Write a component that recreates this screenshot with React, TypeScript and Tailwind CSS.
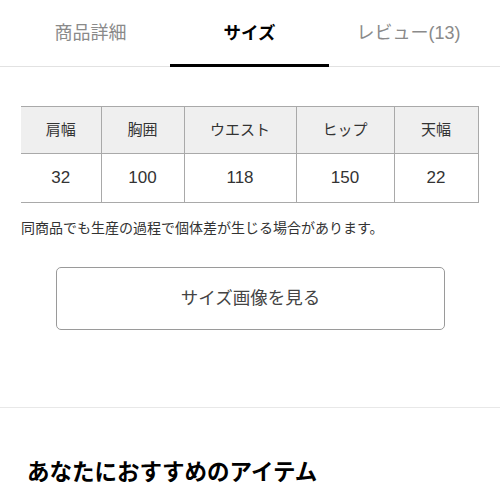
import React from "react";

const tabs = ["商品詳細", "サイズ", "レビュー(13)"];
const active = 1;

const columns = [
  { label: "肩幅", value: "32", w: "w-[80px]" },
  { label: "胸囲", value: "100", w: "w-[83px]" },
  { label: "ウエスト", value: "118", w: "w-[112px]" },
  { label: "ヒップ", value: "150", w: "w-[98px]" },
  { label: "天幅", value: "22", w: "w-[84px]" },
];

export default function App() {
  return (
    <div className="w-[500px] h-[500px] overflow-hidden bg-white font-['Liberation_Sans','Noto_Sans_CJK_JP',sans-serif] text-[#333]">
      {/* Tabs */}
      <div className="flex px-[11px] border-b border-[#e2e2e2]">
        {tabs.map((t, i) => (
          <div
            key={t}
            className={
              i === active
                ? "w-[159px] h-[67px] -mb-px flex items-center justify-center pt-[3px] border-b-[3px] border-black text-[17.5px] font-bold text-black"
                : "w-[159px] h-[66px] flex items-center justify-center text-[18px] text-[#8a8a8a]"
            }
          >
            {t}
          </div>
        ))}
      </div>

      {/* Size table */}
      <div className="pl-[21px] pt-[39px]">
        <table className="border-collapse">
          <thead>
            <tr>
              {columns.map((c, i) => (
                <th
                  key={c.label}
                  className={`${c.w} h-[47px] bg-[#efefef] font-normal text-[15px] text-[#333] border-t-[1.5px] border-b-[1.5px] border-[#a9a9a9] ${i > 0 ? "border-l-[1.5px]" : ""} ${i === columns.length - 1 ? "border-r-[1.5px]" : ""}`}
                >
                  {c.label}
                </th>
              ))}
            </tr>
          </thead>
          <tbody>
            <tr>
              {columns.map((c, i) => (
                <td
                  key={c.label}
                  className={`${c.w} h-[49px] text-center text-[17px] text-[#333] border-b-[1.5px] border-[#a9a9a9] ${i > 0 ? "border-l-[1.5px]" : ""} ${i === columns.length - 1 ? "border-r-[1.5px]" : ""}`}
                >
                  {c.value}
                </td>
              ))}
            </tr>
          </tbody>
        </table>
        <p className="mt-[15px] text-[14px] leading-[20px] text-[#333]">
          同商品でも生産の過程で個体差が生じる場合があります。
        </p>
      </div>

      {/* Button */}
      <div className="flex justify-center pt-[29px] pl-px">
        <button className="w-[389px] h-[63px] border border-[#9a9a9a] rounded-[5px] text-[17.5px] text-[#444] bg-white">
          サイズ画像を見る
        </button>
      </div>

      <div className="mt-[77px] border-t border-[#e8e8e8]" />

      <h2 className="pl-[27px] mt-[50px] text-[22.5px] leading-[30px] font-bold text-black">
        あなたにおすすめのアイテム
      </h2>
    </div>
  );
}
